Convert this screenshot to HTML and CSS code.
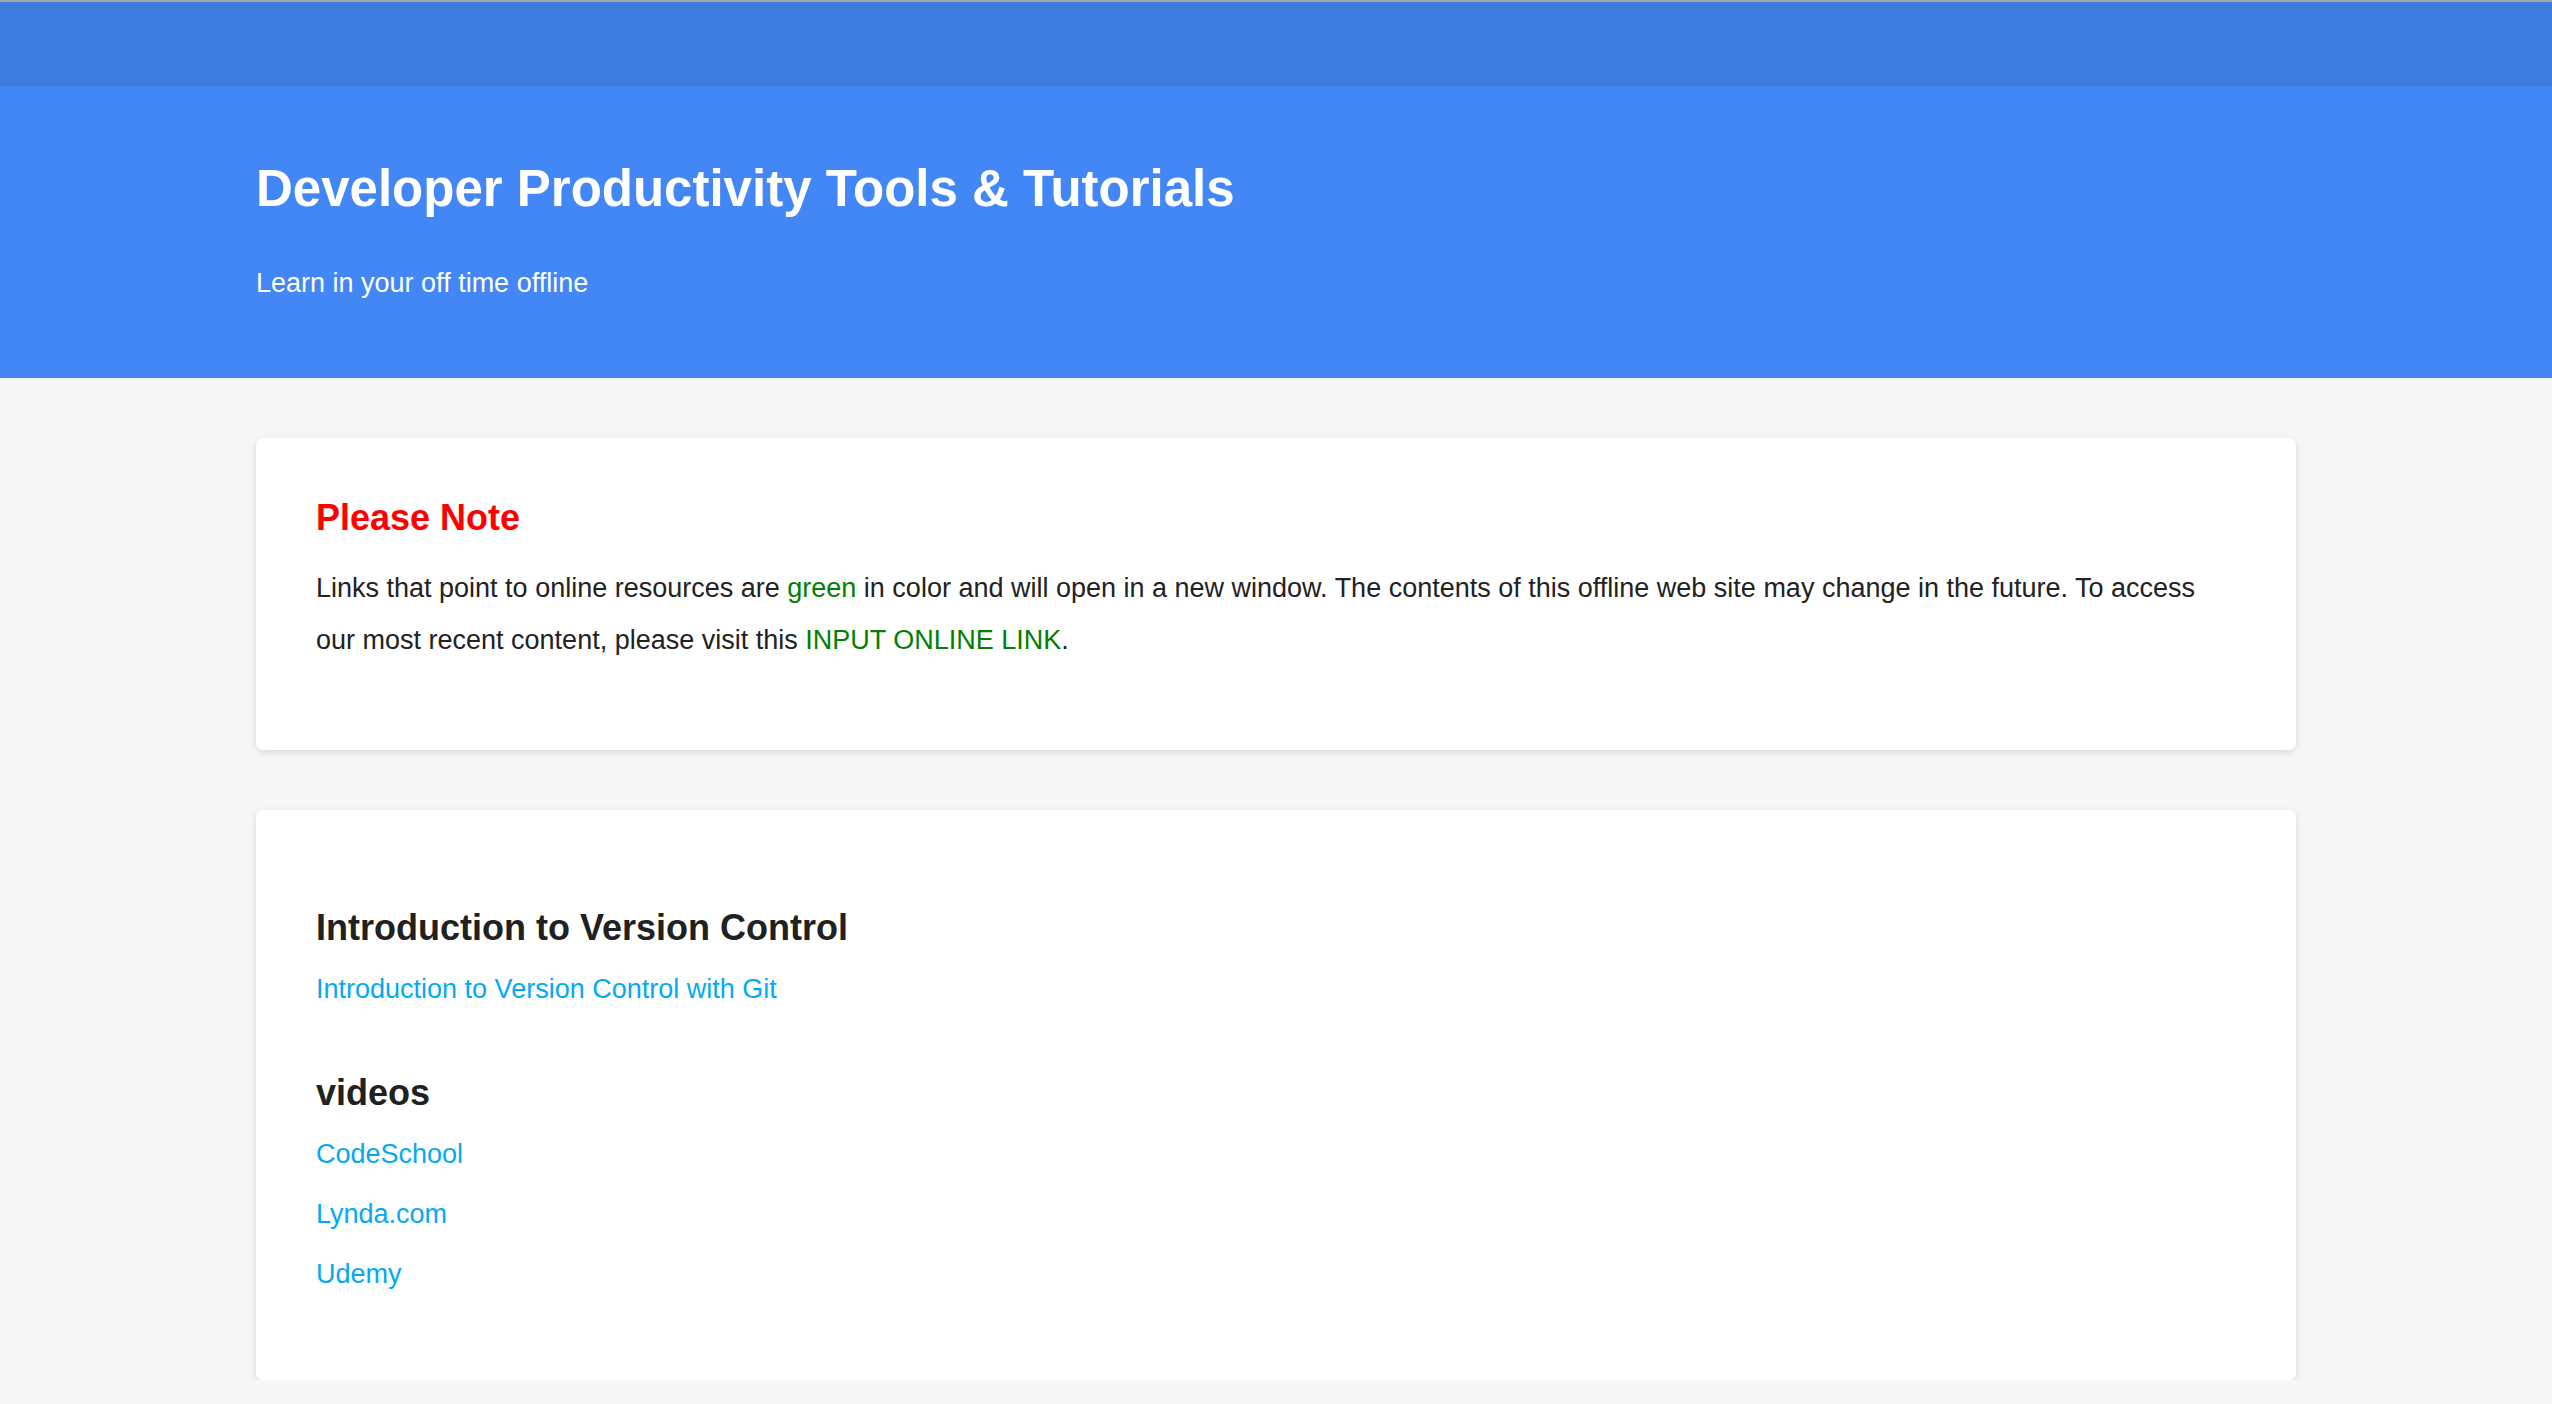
FILE: index.html
```html
<!DOCTYPE html>
<html lang="en">
<head>
<meta charset="utf-8">
<title>Developer Productivity Tools &amp; Tutorials</title>
<link rel="stylesheet" href="styles.css">
</head>
<body>
<div class="topbar"></div>
<header class="hero">
  <div class="container">
    <h1 class="hero-title">Developer Productivity Tools &amp; Tutorials</h1>
    <p class="hero-sub">Learn in your off time offline</p>
  </div>
</header>
<main class="container main">
  <section class="card">
    <h2 class="note-title">Please Note</h2>
    <p class="note-text">Links that point to online resources are <span class="green">green</span> in color and will open in a new window. The contents of this offline web site may change in the future. To access our most recent content, please visit this <a class="green" href="#">INPUT ONLINE LINK</a>.</p>
  </section>
  <section class="card">
    <div class="section">
      <h2 class="section-title">Introduction to Version Control</h2>
      <div class="links">
        <a class="link" href="#">Introduction to Version Control with Git</a>
      </div>
    </div>
    <div class="section">
      <h2 class="section-title">videos</h2>
      <div class="links">
        <a class="link" href="#">CodeSchool</a>
        <a class="link" href="#">Lynda.com</a>
        <a class="link" href="#">Udemy</a>
      </div>
    </div>
  </section>
</main>
</body>
</html>
```
FILE: styles.css
```css
html, body {
  margin: 0;
  padding: 0;
}
body {
  background: #f7f7f7;
  font-family: "Liberation Sans", Arial, Helvetica, sans-serif;
  color: #222222;
}
.topbar {
  height: 84px;
  border-top: 2px solid #a6a6a6;
  background: #3d7bdc;
}
.hero {
  background: #4287f5;
  padding: 73px 0 77px;
  color: #ffffff;
}
.container {
  width: 2040px;
  margin: 0 auto;
}
.hero-title {
  margin: 0;
  font-size: 51px;
  line-height: 60px;
  font-weight: bold;
}
.hero-sub {
  margin: 46px 0 0;
  font-size: 27px;
  line-height: 36px;
}
.main {
  padding: 60px 0 0;
  display: flex;
  flex-direction: column;
  gap: 60px;
}
.card {
  background: #ffffff;
  border-radius: 7px;
  box-shadow: 0 2px 8px rgba(0, 0, 0, 0.13);
  padding: 60px;
}
.note-title {
  margin: 0;
  font-size: 36px;
  line-height: 40px;
  color: #ff0000;
  font-weight: bold;
}
.note-text {
  margin: 24px 0 24px;
  font-size: 27px;
  line-height: 52px;
}
.green {
  color: #008000;
  text-decoration: none;
}
.section {
  padding: 38px 0 20px;
}
.section-title {
  margin: 0;
  font-size: 36px;
  line-height: 40px;
  font-weight: bold;
  color: #212121;
}
.links {
  margin-top: 16px;
  display: flex;
  flex-direction: column;
  gap: 9px;
}
.link {
  font-size: 27px;
  line-height: 51px;
  color: #03a9f4;
  text-decoration: none;
  align-self: flex-start;
}
```
